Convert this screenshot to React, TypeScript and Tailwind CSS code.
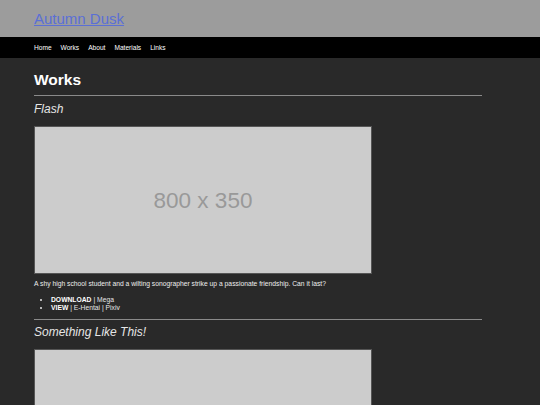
import React from "react";

const font = { fontFamily: '"Liberation Sans", Arial, sans-serif' };

function Placeholder() {
  return (
    <div className="w-[338px] h-[148px] bg-[#cccccc] border border-[#555555] flex items-center justify-center">
      <span className="text-[22.5px] text-[#999999] leading-none pt-[3px]">800 x 350</span>
    </div>
  );
}

export default function App() {
  return (
    <div style={font} className="min-h-[405px] bg-[#292929] text-[#e6e6e6]">
      <header className="h-[37px] bg-[#9c9c9c] flex items-center px-[34px]">
        <a href="#" className="text-[15px] leading-none text-[#5a6fd6] underline">
          Autumn Dusk
        </a>
      </header>
      <nav className="h-[21px] bg-black flex items-center px-[34px] gap-[9px] text-[6.6px] text-white">
        <a href="#">Home</a>
        <a href="#">Works</a>
        <a href="#">About</a>
        <a href="#">Materials</a>
        <a href="#">Links</a>
      </nav>
      <main className="ml-[34px] w-[448px] pt-[13px]">
        <h1 className="text-[15.5px] font-bold text-white leading-[18px]">Works</h1>
        <hr className="mt-[6px] border-0 h-px bg-[#8a8a8a]" />
        <h2 className="mt-[6px] text-[12px] italic leading-[14px] text-[#e6e6e6]">Flash</h2>
        <div className="mt-[10px]">
          <Placeholder />
        </div>
        <p className="mt-[6px] text-[6.75px] leading-[8px] text-[#eeeeee]">
          A shy high school student and a wilting sonographer strike up a passionate friendship. Can it last?
        </p>
        <ul className="mt-[8px] ml-[17px] list-disc text-[6.75px] leading-[8px]">
          <li>
            <b className="text-white">DOWNLOAD</b> | Mega
          </li>
          <li>
            <b className="text-white">VIEW</b> | E-Hentai | Pixiv
          </li>
        </ul>
        <hr className="mt-[7px] border-0 h-px bg-[#8a8a8a]" />
        <h2 className="mt-[5px] text-[12px] italic leading-[14px] text-[#e6e6e6]">Something Like This!</h2>
        <div className="mt-[10px]">
          <Placeholder />
        </div>
      </main>
    </div>
  );
}
